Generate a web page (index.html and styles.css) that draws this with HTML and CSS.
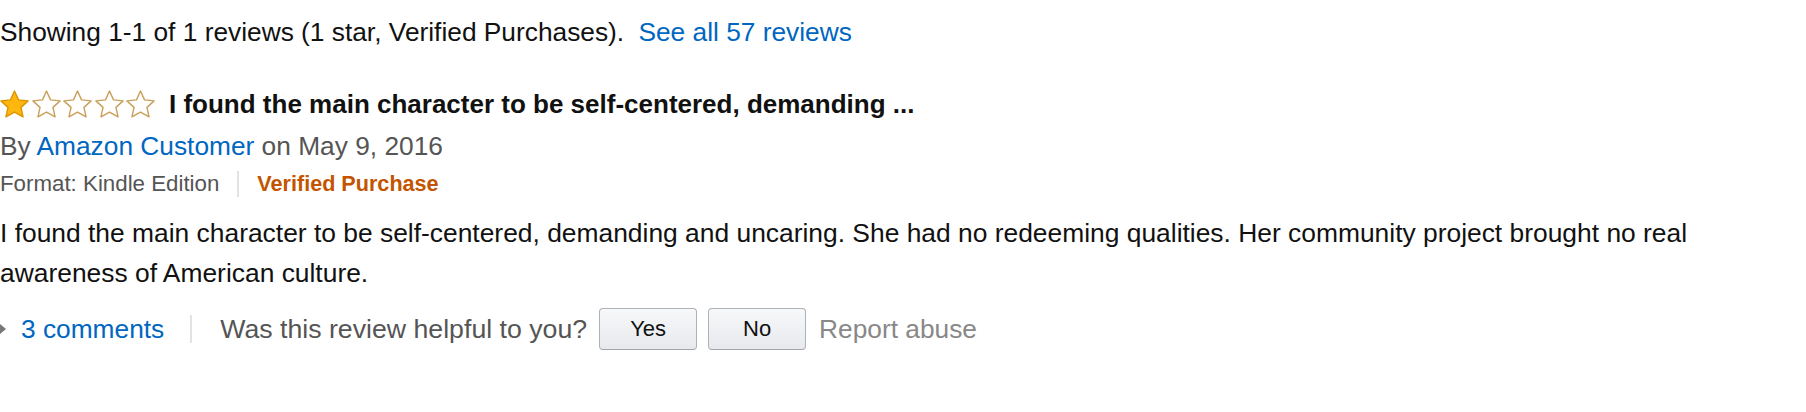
FILE: index.html
```html
<!DOCTYPE html>
<html lang="en">
<head>
  <meta charset="UTF-8" />
  <title>Customer Reviews</title>
  <link rel="stylesheet" href="styles.css">
</head>
<body>
  <div class="summary">
    Showing 1-1 of 1 reviews (1 star, Verified Purchases).
    <a href="#" class="link see-all">See all 57 reviews</a>
  </div>

  <div class="review">
    <div class="title-row">
      <span class="stars">
        <svg class="star full" viewBox="0.8 0.9 22.4 21.4"><path d="M12 1.6l3.1 6.8 7.4.8-5.5 5 1.6 7.3L12 17.8l-6.6 3.7 1.6-7.3-5.5-5 7.4-.8z"/></svg>
        <svg class="star" viewBox="0.8 0.9 22.4 21.4"><path d="M12 1.6l3.1 6.8 7.4.8-5.5 5 1.6 7.3L12 17.8l-6.6 3.7 1.6-7.3-5.5-5 7.4-.8z"/></svg>
        <svg class="star" viewBox="0.8 0.9 22.4 21.4"><path d="M12 1.6l3.1 6.8 7.4.8-5.5 5 1.6 7.3L12 17.8l-6.6 3.7 1.6-7.3-5.5-5 7.4-.8z"/></svg>
        <svg class="star" viewBox="0.8 0.9 22.4 21.4"><path d="M12 1.6l3.1 6.8 7.4.8-5.5 5 1.6 7.3L12 17.8l-6.6 3.7 1.6-7.3-5.5-5 7.4-.8z"/></svg>
        <svg class="star" viewBox="0.8 0.9 22.4 21.4"><path d="M12 1.6l3.1 6.8 7.4.8-5.5 5 1.6 7.3L12 17.8l-6.6 3.7 1.6-7.3-5.5-5 7.4-.8z"/></svg>
      </span>
      <span class="review-title">I found the main character to be self-centered, demanding ...</span>
    </div>

    <div class="byline">
      By <a href="#" class="link">Amazon Customer</a> on May 9, 2016
    </div>

    <div class="format-line">
      <span>Format: Kindle Edition</span>
      <span class="divider"></span>
      <span class="verified">Verified Purchase</span>
    </div>

    <p class="review-text">
      I found the main character to be self-centered, demanding and uncaring. She had no redeeming qualities. Her community project brought no real awareness of American culture.
    </p>

    <div class="actions">
      <span class="caret"></span>
      <a href="#" class="link">3 comments</a>
      <span class="divider tall"></span>
      <span class="helpful">Was this review helpful to you?</span>
      <button class="vote">Yes</button>
      <button class="vote">No</button>
      <a href="#" class="report">Report abuse</a>
    </div>
  </div>
</body>
</html>
```

FILE: styles.css
```css
* {
  box-sizing: border-box;
}

body {
  margin: 0;
  font-family: 'Liberation Sans', Arial, sans-serif;
  font-size: 26.3px;
  color: #111;
  background: #fff;
}

.link {
  color: #0066c0;
  text-decoration: none;
}

.summary {
  margin-top: 13px;
  line-height: 38px;
}

.see-all {
  margin-left: 7px;
}

.review {
  margin-top: 32px;
}

.title-row {
  display: flex;
  align-items: center;
  height: 42px;
}

.stars {
  display: flex;
  gap: 2.5px;
  margin-right: 14px;
}

.star {
  width: 29px;
  height: 28px;
  fill: #fff;
  stroke: #c9a05a;
  stroke-width: 1.1;
  stroke-linejoin: round;
}

.star.full {
  fill: #ffb70f;
  stroke: #dc9500;
}

.review-title {
  font-weight: bold;
  font-size: 26px;
}

.byline {
  height: 42px;
  line-height: 42px;
  color: #555;
}

.format-line {
  display: flex;
  align-items: center;
  height: 34px;
  font-size: 22.3px;
  color: #555;
}

.divider {
  width: 2px;
  height: 26px;
  background: #e3e3e3;
  margin: 0 18px;
}

.divider.tall {
  height: 28px;
  margin: 0 28px 0 26px;
}

.verified {
  color: #c45500;
  font-weight: bold;
  font-size: 21.6px;
}

.review-text {
  margin: 12px 0 0;
  line-height: 40px;
  font-size: 26.4px;
  max-width: 1740px;
}

.actions {
  display: flex;
  align-items: center;
  height: 44px;
  margin-top: 14px;
  color: #555;
}

.actions .helpful {
  font-size: 26.7px;
}

.caret {
  width: 0;
  height: 0;
  border-top: 5px solid transparent;
  border-bottom: 5px solid transparent;
  border-left: 6px solid #777;
  margin-right: 15px;
}

.vote {
  width: 98px;
  height: 42px;
  margin-left: 12px;
  border: 1px solid #adb1b8;
  border-bottom-color: #a2a6ac;
  border-radius: 4px;
  background: linear-gradient(to bottom, #f7f8fa, #e7e9ec);
  font-family: inherit;
  font-size: 22px;
  color: #111;
  cursor: pointer;
}

.vote + .vote {
  margin-left: 11px;
}

.report {
  margin-left: 13px;
  color: #888;
  text-decoration: none;
}
```
